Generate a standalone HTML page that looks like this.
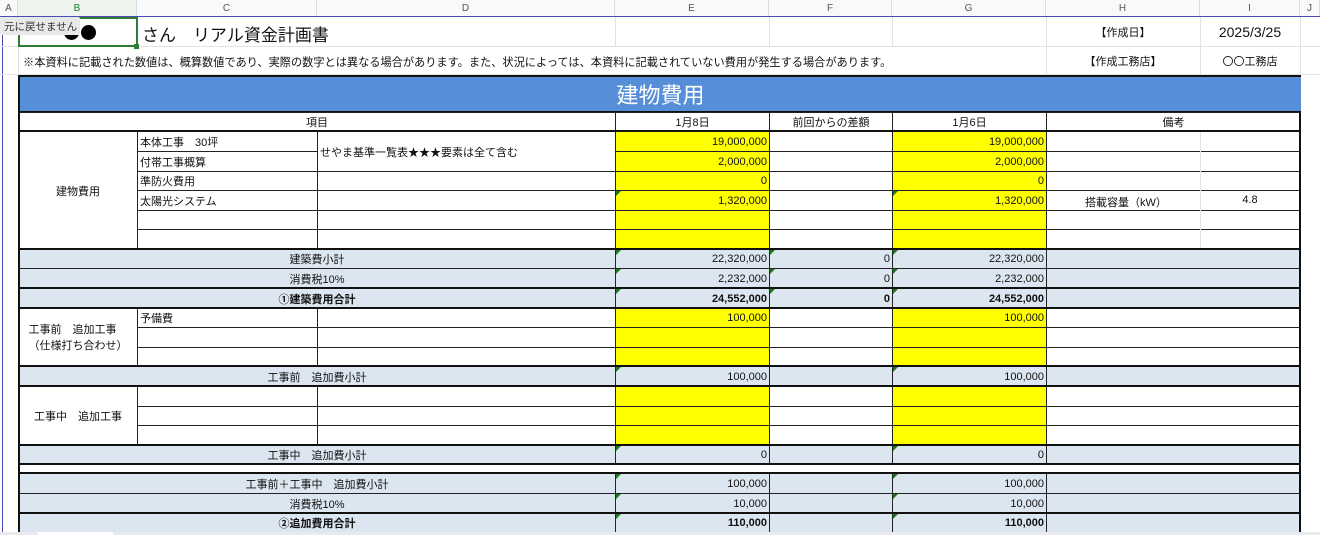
<!DOCTYPE html>
<html><head><meta charset="utf-8"><style>
*{margin:0;padding:0;box-sizing:border-box}
body{width:1320px;height:535px;overflow:hidden;background:#fff;position:relative;font-family:"Liberation Sans","Noto Sans CJK JP",sans-serif;color:#111}
.a{position:absolute}
.c{position:absolute;border:1px solid #222;font-size:11px;display:flex;align-items:center;white-space:nowrap;overflow:hidden;padding:0 2px}
.ct{justify-content:center}
.r{justify-content:flex-end}
.y{background:#ffff00}
.b{background:#dce6f1}
.w{background:#fff}
.bd{font-weight:bold}
.h{position:absolute;height:2px;background:#111}
.g{position:absolute;width:0;height:0;border-top:5px solid #1a7a1a;border-right:5px solid transparent}
.gl{position:absolute;background:#e2e2e2}
.hd{position:absolute;top:0;height:17px;font-size:10px;color:#555;display:flex;align-items:center;justify-content:center;border-right:1px solid #ddd;background:#f8f9fa}
.dot{position:absolute;width:15px;height:15px;border-radius:50%;background:#000}
</style></head><body>
<div class="hd" style="left:0;width:18px">A</div>
<div class="hd" style="left:18px;width:119px;color:#1e7e34;background:#eef3ee">B</div>
<div class="hd" style="left:137px;width:180px">C</div>
<div class="hd" style="left:317px;width:298px">D</div>
<div class="hd" style="left:615px;width:154px">E</div>
<div class="hd" style="left:769px;width:123px">F</div>
<div class="hd" style="left:892px;width:154px">G</div>
<div class="hd" style="left:1046px;width:154px">H</div>
<div class="hd" style="left:1200px;width:100px">I</div>
<div class="hd" style="left:1300px;width:20px">J</div>
<div class="a" style="left:0;top:16px;width:1320px;height:1px;background:#4a4ab8"></div>
<div class="a" style="left:2px;top:17px;width:1px;height:515px;background:#4a4ab8"></div>
<div class="gl" style="left:0;top:46px;width:1320px;height:1px"></div>
<div class="gl" style="left:0;top:74px;width:1320px;height:1px"></div>
<div class="gl" style="left:615px;top:17px;width:1px;height:30px"></div>
<div class="gl" style="left:769px;top:17px;width:1px;height:30px"></div>
<div class="gl" style="left:892px;top:17px;width:1px;height:30px"></div>
<div class="gl" style="left:1046px;top:17px;width:1px;height:58px"></div>
<div class="gl" style="left:1200px;top:17px;width:1px;height:58px"></div>
<div class="gl" style="left:1300px;top:17px;width:1px;height:515px"></div>
<div class="gl" style="left:18px;top:17px;width:1px;height:58px"></div>
<div class="dot" style="left:64px;top:25px"></div>
<div class="dot" style="left:81px;top:25px"></div>
<div class="a" style="left:18px;top:17px;width:120px;height:30px;border:2px solid #2e7d32"></div>
<div class="a" style="left:134px;top:44px;width:5px;height:5px;background:#2e7d32"></div>
<div class="a" style="left:0;top:17px;width:80px;height:18px;background:#e8e8e8;font-size:10.5px;color:#333;display:flex;align-items:center;padding-left:4px;border-radius:2px;white-space:nowrap">元に戻せません</div>
<div class="a" style="left:142px;top:21px;font-size:17px">さん　リアル資金計画書</div>
<div class="a" style="left:1046px;top:17px;width:154px;height:30px;font-size:11px;display:flex;align-items:center;justify-content:center">【作成日】</div>
<div class="a" style="left:1200px;top:17px;width:100px;height:30px;font-size:14px;display:flex;align-items:center;justify-content:center">2025/3/25</div>
<div class="a" style="left:23px;top:54px;font-size:11.2px;white-space:nowrap">※本資料に記載された数値は、概算数値であり、実際の数字とは異なる場合があります。また、状況によっては、本資料に記載されていない費用が発生する場合があります。</div>
<div class="a" style="left:1046px;top:47px;width:154px;height:28px;font-size:11px;display:flex;align-items:center;justify-content:center">【作成工務店】</div>
<div class="a" style="left:1200px;top:47px;width:100px;height:28px;font-size:11px;display:flex;align-items:center;justify-content:center">〇〇工務店</div>
<div class="a" style="left:18px;top:75px;width:1283px;height:38px;background:#568ed8;border:2px solid #111;border-right:none;color:#fff;font-size:22px;display:flex;align-items:center;justify-content:center">建物費用</div>
<div class="c ct w" style="left:18px;top:112px;width:598px;height:20px">項目</div>
<div class="c ct w" style="left:615px;top:112px;width:155px;height:20px">1月8日</div>
<div class="c ct w" style="left:769px;top:112px;width:124px;height:20px">前回からの差額</div>
<div class="c ct w" style="left:892px;top:112px;width:155px;height:20px">1月6日</div>
<div class="c ct w" style="left:1046px;top:112px;width:255px;height:20px">備考</div>
<div class="c ct w" style="left:18px;top:131px;width:120px;height:119px">建物費用</div>
<div class="c w" style="left:137px;top:131px;width:181px;height:21px">本体工事　30坪</div>
<div class="c w" style="left:137px;top:151px;width:181px;height:21px">付帯工事概算</div>
<div class="c w" style="left:137px;top:171px;width:181px;height:20px">準防火費用</div>
<div class="c w" style="left:137px;top:190px;width:181px;height:21px">太陽光システム</div>
<div class="c w" style="left:137px;top:210px;width:181px;height:20px"></div>
<div class="c w" style="left:137px;top:229px;width:181px;height:21px"></div>
<div class="c w" style="left:317px;top:131px;width:299px;height:41px">せやま基準一覧表★★★要素は全て含む</div>
<div class="c w" style="left:317px;top:171px;width:299px;height:20px"></div>
<div class="c w" style="left:317px;top:190px;width:299px;height:21px"></div>
<div class="c w" style="left:317px;top:210px;width:299px;height:20px"></div>
<div class="c w" style="left:317px;top:229px;width:299px;height:21px"></div>
<div class="c r y" style="left:615px;top:131px;width:155px;height:21px">19,000,000</div>
<div class="c r y" style="left:615px;top:151px;width:155px;height:21px">2,000,000</div>
<div class="c r y" style="left:615px;top:171px;width:155px;height:20px">0</div>
<div class="c r y" style="left:615px;top:190px;width:155px;height:21px">1,320,000</div>
<div class="c r y" style="left:615px;top:210px;width:155px;height:20px"></div>
<div class="c r y" style="left:615px;top:229px;width:155px;height:21px"></div>
<div class="c w" style="left:769px;top:131px;width:124px;height:21px"></div>
<div class="c w" style="left:769px;top:151px;width:124px;height:21px"></div>
<div class="c w" style="left:769px;top:171px;width:124px;height:20px"></div>
<div class="c w" style="left:769px;top:190px;width:124px;height:21px"></div>
<div class="c w" style="left:769px;top:210px;width:124px;height:20px"></div>
<div class="c w" style="left:769px;top:229px;width:124px;height:21px"></div>
<div class="c r y" style="left:892px;top:131px;width:155px;height:21px">19,000,000</div>
<div class="c r y" style="left:892px;top:151px;width:155px;height:21px">2,000,000</div>
<div class="c r y" style="left:892px;top:171px;width:155px;height:20px">0</div>
<div class="c r y" style="left:892px;top:190px;width:155px;height:21px">1,320,000</div>
<div class="c r y" style="left:892px;top:210px;width:155px;height:20px"></div>
<div class="c r y" style="left:892px;top:229px;width:155px;height:21px"></div>
<div class="c w" style="left:1046px;top:131px;width:255px;height:21px"></div>
<div class="c w" style="left:1046px;top:151px;width:255px;height:21px"></div>
<div class="c w" style="left:1046px;top:171px;width:255px;height:20px"></div>
<div class="c w" style="left:1046px;top:190px;width:255px;height:21px"></div>
<div class="c w" style="left:1046px;top:210px;width:255px;height:20px"></div>
<div class="c w" style="left:1046px;top:229px;width:255px;height:21px"></div>
<div class="gl" style="left:1200px;top:132px;width:1px;height:117px"></div>
<div class="a" style="left:1085px;top:194px;font-size:11px">搭載容量（kW）</div>
<div class="a" style="left:1200px;top:194px;width:100px;text-align:center;font-size:11px">4.8</div>
<div class="c ct b" style="left:18px;top:249px;width:598px;height:20px">建築費小計</div>
<div class="c ct b" style="left:18px;top:268px;width:598px;height:21px">消費税10%</div>
<div class="c ct b bd" style="left:18px;top:288px;width:598px;height:21px">①建築費用合計</div>
<div class="c r b" style="left:615px;top:249px;width:155px;height:20px">22,320,000</div>
<div class="c r b" style="left:615px;top:268px;width:155px;height:21px">2,232,000</div>
<div class="c r b bd" style="left:615px;top:288px;width:155px;height:21px">24,552,000</div>
<div class="c r b" style="left:769px;top:249px;width:124px;height:20px">0</div>
<div class="c r b" style="left:769px;top:268px;width:124px;height:21px">0</div>
<div class="c r b bd" style="left:769px;top:288px;width:124px;height:21px">0</div>
<div class="c r b" style="left:892px;top:249px;width:155px;height:20px">22,320,000</div>
<div class="c r b" style="left:892px;top:268px;width:155px;height:21px">2,232,000</div>
<div class="c r b bd" style="left:892px;top:288px;width:155px;height:21px">24,552,000</div>
<div class="c b" style="left:1046px;top:249px;width:255px;height:20px"></div>
<div class="c b" style="left:1046px;top:268px;width:255px;height:21px"></div>
<div class="c b" style="left:1046px;top:288px;width:255px;height:21px"></div>
<div class="c ct w" style="left:18px;top:308px;width:120px;height:59px;flex-direction:column;line-height:16px">工事前　追加工事<br>（仕様打ち合わせ）</div>
<div class="c w" style="left:137px;top:308px;width:181px;height:20px">予備費</div>
<div class="c w" style="left:137px;top:327px;width:181px;height:21px"></div>
<div class="c w" style="left:137px;top:347px;width:181px;height:20px"></div>
<div class="c w" style="left:317px;top:308px;width:299px;height:20px"></div>
<div class="c w" style="left:317px;top:327px;width:299px;height:21px"></div>
<div class="c w" style="left:317px;top:347px;width:299px;height:20px"></div>
<div class="c r y" style="left:615px;top:308px;width:155px;height:20px">100,000</div>
<div class="c y" style="left:615px;top:327px;width:155px;height:21px"></div>
<div class="c y" style="left:615px;top:347px;width:155px;height:20px"></div>
<div class="c w" style="left:769px;top:308px;width:124px;height:20px"></div>
<div class="c w" style="left:769px;top:327px;width:124px;height:21px"></div>
<div class="c w" style="left:769px;top:347px;width:124px;height:20px"></div>
<div class="c r y" style="left:892px;top:308px;width:155px;height:20px">100,000</div>
<div class="c y" style="left:892px;top:327px;width:155px;height:21px"></div>
<div class="c y" style="left:892px;top:347px;width:155px;height:20px"></div>
<div class="c w" style="left:1046px;top:308px;width:255px;height:20px"></div>
<div class="c w" style="left:1046px;top:327px;width:255px;height:21px"></div>
<div class="c w" style="left:1046px;top:347px;width:255px;height:20px"></div>
<div class="c ct b" style="left:18px;top:366px;width:598px;height:21px">工事前　追加費小計</div>
<div class="c r b" style="left:615px;top:366px;width:155px;height:21px">100,000</div>
<div class="c b" style="left:769px;top:366px;width:124px;height:21px"></div>
<div class="c r b" style="left:892px;top:366px;width:155px;height:21px">100,000</div>
<div class="c b" style="left:1046px;top:366px;width:255px;height:21px"></div>
<div class="c ct w" style="left:18px;top:386px;width:120px;height:60px">工事中　追加工事</div>
<div class="c w" style="left:137px;top:386px;width:181px;height:21px"></div>
<div class="c w" style="left:137px;top:406px;width:181px;height:20px"></div>
<div class="c w" style="left:137px;top:425px;width:181px;height:21px"></div>
<div class="c w" style="left:317px;top:386px;width:299px;height:21px"></div>
<div class="c w" style="left:317px;top:406px;width:299px;height:20px"></div>
<div class="c w" style="left:317px;top:425px;width:299px;height:21px"></div>
<div class="c y" style="left:615px;top:386px;width:155px;height:21px"></div>
<div class="c y" style="left:615px;top:406px;width:155px;height:20px"></div>
<div class="c y" style="left:615px;top:425px;width:155px;height:21px"></div>
<div class="c w" style="left:769px;top:386px;width:124px;height:21px"></div>
<div class="c w" style="left:769px;top:406px;width:124px;height:20px"></div>
<div class="c w" style="left:769px;top:425px;width:124px;height:21px"></div>
<div class="c y" style="left:892px;top:386px;width:155px;height:21px"></div>
<div class="c y" style="left:892px;top:406px;width:155px;height:20px"></div>
<div class="c y" style="left:892px;top:425px;width:155px;height:21px"></div>
<div class="c w" style="left:1046px;top:386px;width:255px;height:21px"></div>
<div class="c w" style="left:1046px;top:406px;width:255px;height:20px"></div>
<div class="c w" style="left:1046px;top:425px;width:255px;height:21px"></div>
<div class="c ct b" style="left:18px;top:445px;width:598px;height:20px">工事中　追加費小計</div>
<div class="c r b" style="left:615px;top:445px;width:155px;height:20px">0</div>
<div class="c b" style="left:769px;top:445px;width:124px;height:20px"></div>
<div class="c r b" style="left:892px;top:445px;width:155px;height:20px">0</div>
<div class="c b" style="left:1046px;top:445px;width:255px;height:20px"></div>
<div class="a w" style="left:18px;top:464px;width:1283px;height:10px;border-left:1px solid #222;border-right:1px solid #222"></div>
<div class="c ct b" style="left:18px;top:473px;width:598px;height:21px">工事前＋工事中　追加費小計</div>
<div class="c ct b" style="left:18px;top:493px;width:598px;height:21px">消費税10%</div>
<div class="c ct b bd" style="left:18px;top:513px;width:598px;height:20px">②追加費用合計</div>
<div class="c r b" style="left:615px;top:473px;width:155px;height:21px">100,000</div>
<div class="c r b" style="left:615px;top:493px;width:155px;height:21px">10,000</div>
<div class="c r b bd" style="left:615px;top:513px;width:155px;height:20px">110,000</div>
<div class="c b" style="left:769px;top:473px;width:124px;height:21px"></div>
<div class="c b" style="left:769px;top:493px;width:124px;height:21px"></div>
<div class="c b" style="left:769px;top:513px;width:124px;height:20px"></div>
<div class="c r b" style="left:892px;top:473px;width:155px;height:21px">100,000</div>
<div class="c r b" style="left:892px;top:493px;width:155px;height:21px">10,000</div>
<div class="c r b bd" style="left:892px;top:513px;width:155px;height:20px">110,000</div>
<div class="c b" style="left:1046px;top:473px;width:255px;height:21px"></div>
<div class="c b" style="left:1046px;top:493px;width:255px;height:21px"></div>
<div class="c b" style="left:1046px;top:513px;width:255px;height:20px"></div>
<div class="h" style="left:18px;top:130px;width:1283px"></div>
<div class="h" style="left:18px;top:248px;width:1283px"></div>
<div class="h" style="left:18px;top:287px;width:1283px"></div>
<div class="h" style="left:18px;top:307px;width:1283px"></div>
<div class="h" style="left:18px;top:365px;width:1283px"></div>
<div class="h" style="left:18px;top:385px;width:1283px"></div>
<div class="h" style="left:18px;top:444px;width:1283px"></div>
<div class="h" style="left:18px;top:463px;width:1283px"></div>
<div class="h" style="left:18px;top:472px;width:1283px"></div>
<div class="h" style="left:18px;top:512px;width:1283px"></div>
<div class="a" style="left:18px;top:112px;width:2px;height:420px;background:#111"></div>
<div class="a" style="left:1299px;top:112px;width:2px;height:420px;background:#111"></div>
<div class="g" style="left:616px;top:191px"></div><div class="g" style="left:893px;top:191px"></div>
<div class="g" style="left:616px;top:250px"></div><div class="g" style="left:770px;top:250px"></div><div class="g" style="left:893px;top:250px"></div>
<div class="g" style="left:616px;top:269px"></div><div class="g" style="left:770px;top:269px"></div><div class="g" style="left:893px;top:269px"></div>
<div class="g" style="left:616px;top:289px"></div><div class="g" style="left:770px;top:289px"></div><div class="g" style="left:893px;top:289px"></div>
<div class="g" style="left:616px;top:367px"></div><div class="g" style="left:893px;top:367px"></div>
<div class="g" style="left:616px;top:446px"></div><div class="g" style="left:893px;top:446px"></div>
<div class="g" style="left:616px;top:474px"></div><div class="g" style="left:893px;top:474px"></div>
<div class="g" style="left:616px;top:494px"></div><div class="g" style="left:893px;top:494px"></div>
<div class="g" style="left:616px;top:514px"></div><div class="g" style="left:893px;top:514px"></div>
<div class="a" style="left:0;top:532px;width:1320px;height:3px;background:#e8eaed"></div>
<div class="a" style="left:38px;top:532px;width:75px;height:3px;background:#fff"></div>
</body></html>
